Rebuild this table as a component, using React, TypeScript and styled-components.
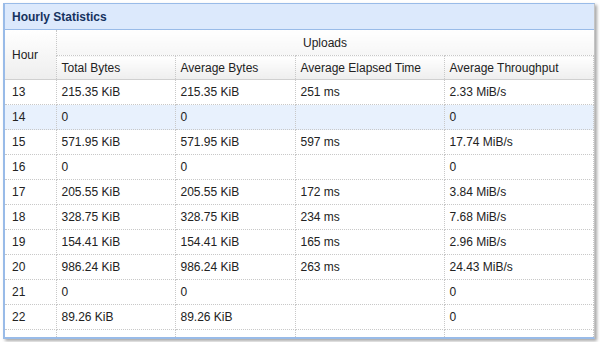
import React from 'react';
import { styled, createGlobalStyle } from 'styled-components';

const GlobalStyle = createGlobalStyle`
  html, body {
    margin: 0;
    padding: 0;
    background: #ffffff;
    overflow: hidden;
  }
  body {
    font-family: "Liberation Sans", Arial, sans-serif;
  }
`;

type Row = {
   hour: number;
   total: string;
   avg: string;
   elapsed: string;
   throughput: string;
   highlight?: boolean;
};

const rows: Row[] = [
   { hour: 13, total: '215.35 KiB', avg: '215.35 KiB', elapsed: '251 ms', throughput: '2.33 MiB/s' },
   { hour: 14, total: '0', avg: '0', elapsed: '', throughput: '0', highlight: true },
   { hour: 15, total: '571.95 KiB', avg: '571.95 KiB', elapsed: '597 ms', throughput: '17.74 MiB/s' },
   { hour: 16, total: '0', avg: '0', elapsed: '', throughput: '0' },
   { hour: 17, total: '205.55 KiB', avg: '205.55 KiB', elapsed: '172 ms', throughput: '3.84 MiB/s' },
   { hour: 18, total: '328.75 KiB', avg: '328.75 KiB', elapsed: '234 ms', throughput: '7.68 MiB/s' },
   { hour: 19, total: '154.41 KiB', avg: '154.41 KiB', elapsed: '165 ms', throughput: '2.96 MiB/s' },
   { hour: 20, total: '986.24 KiB', avg: '986.24 KiB', elapsed: '263 ms', throughput: '24.43 MiB/s' },
   { hour: 21, total: '0', avg: '0', elapsed: '', throughput: '0' },
   { hour: 22, total: '89.26 KiB', avg: '89.26 KiB', elapsed: '', throughput: '0' },
   { hour: 23, total: '0', avg: '0', elapsed: '', throughput: '0' },
];

export default function App() {
   return (
      <>
         <GlobalStyle />
         <Page>
            <Panel>
               <PanelHeader>Hourly Statistics</PanelHeader>
               <PanelBody>
                  <Grid>
                     <colgroup>
                        <col style={{ width: 51 }} />
                        <col style={{ width: 119 }} />
                        <col style={{ width: 120 }} />
                        <col style={{ width: 149 }} />
                        <col />
                     </colgroup>
                     <thead>
                        <tr>
                           <HeadCell rowSpan={2} $first>Hour</HeadCell>
                           <GroupCell colSpan={4}>Uploads</GroupCell>
                        </tr>
                        <tr>
                           <HeadCell>Total Bytes</HeadCell>
                           <HeadCell>Average Bytes</HeadCell>
                           <HeadCell>Average Elapsed Time</HeadCell>
                           <HeadCell>Average Throughput</HeadCell>
                        </tr>
                     </thead>
                     <tbody>
                        {rows.map((r) => (
                           <DataRow key={r.hour} $highlight={r.highlight}>
                              <Cell $first>{r.hour}</Cell>
                              <Cell>{r.total}</Cell>
                              <Cell>{r.avg}</Cell>
                              <Cell>{r.elapsed}</Cell>
                              <Cell>{r.throughput}</Cell>
                           </DataRow>
                        ))}
                     </tbody>
                  </Grid>
               </PanelBody>
            </Panel>
         </Page>
      </>
   );
}

const Page = styled.div`
   padding: 3px 0 0 3px;
   height: 342px;
   box-sizing: border-box;
`;

const Panel = styled.div`
   width: 592px;
   height: 336px;
   box-sizing: border-box;
   display: flex;
   flex-direction: column;
   border: 1px solid #99bbe8;
   border-left: 2px solid #99bbe8;
   border-right-color: #c4c4c4;
   border-bottom: 2px solid #99bbe8;
   box-shadow: 2px 2px 3px rgba(0, 0, 0, 0.35);
   background: #ffffff;
`;

const PanelHeader = styled.div`
   height: 25px;
   flex: none;
   display: flex;
   align-items: center;
   padding-left: 7px;
   background: #dce9fc;
   border-bottom: 1px solid #99bbe8;
   font-size: 12px;
   font-weight: bold;
   color: #15325f;
`;

const PanelBody = styled.div`
   flex: 1;
   overflow: hidden;
`;

const Grid = styled.table`
   width: 100%;
   border-collapse: collapse;
   table-layout: fixed;
   font-size: 12px;
   color: #222222;
`;

const HeadCell = styled.th<{ $first?: boolean }>`
   height: 23px;
   padding: 0 0 0 ${(p) => (p.$first ? 7 : 5)}px;
   text-align: left;
   font-weight: normal;
   color: #222222;
   background: linear-gradient(#ffffff, #eeeeee);
   border-right: 1px dotted #c8c8c8;
   border-bottom: 1px solid #d0d0d0;
   white-space: nowrap;
`;

const GroupCell = styled.th`
   height: 25px;
   padding: 0;
   text-align: center;
   font-weight: normal;
   color: #222222;
   background: linear-gradient(#ffffff, #f6f6f6);
   border-bottom: 1px dotted #c8c8c8;
`;

const DataRow = styled.tr<{ $highlight?: boolean }>`
   background: ${(p) => (p.$highlight ? '#e8f1fd' : '#ffffff')};
`;

const Cell = styled.td<{ $first?: boolean }>`
   height: 24px;
   padding: 0 0 0 ${(p) => (p.$first ? 7 : 5)}px;
   border-right: 1px dotted #c8c8c8;
   border-bottom: 1px dotted #c8c8c8;
   white-space: nowrap;
`;
